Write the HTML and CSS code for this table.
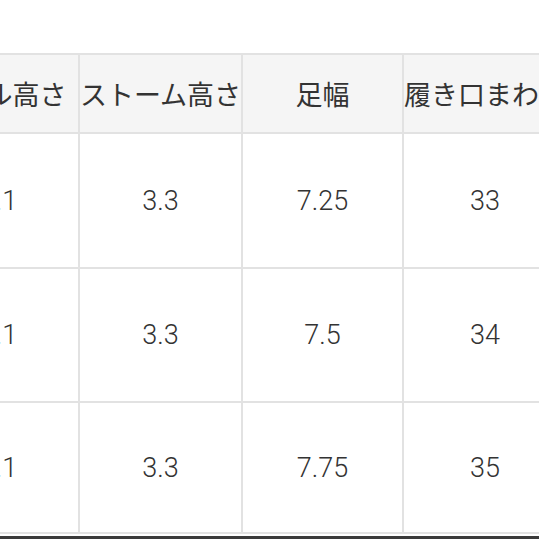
FILE: index.html
```html
<!DOCTYPE html>
<html lang="ja">
<head>
<meta charset="utf-8">
<link rel="stylesheet" href="styles.css">
</head>
<body>
<div class="page">
  <div class="table">
    <div class="cell head">ヒール高さ</div>
    <div class="cell head">ストーム高さ</div>
    <div class="cell head">足幅</div>
    <div class="cell head">履き口まわり</div>

    <div class="cell">2.1</div>
    <div class="cell">3.3</div>
    <div class="cell">7.25</div>
    <div class="cell">33</div>

    <div class="cell">2.1</div>
    <div class="cell">3.3</div>
    <div class="cell">7.5</div>
    <div class="cell">34</div>

    <div class="cell">2.1</div>
    <div class="cell">3.3</div>
    <div class="cell">7.75</div>
    <div class="cell">35</div>
  </div>
  <div class="bar"></div>
</div>
</body>
</html>
```

FILE: styles.css
```css
html, body {
  margin: 0;
  padding: 0;
  background: #ffffff;
}
.page {
  width: 539px;
  height: 539px;
  overflow: hidden;
  position: relative;
  padding-top: 53px;
  box-sizing: border-box;
}
.table {
  display: grid;
  grid-template-columns: 158px 161px 159px 162px;
  grid-template-rows: 77px 133px 132px 129px;
  gap: 2px;
  padding: 2px;
  background: #e2e2e2;
  margin-left: -82px;
  width: max-content;
  font-family: "Roboto", "Noto Sans CJK JP", sans-serif;
  font-weight: 300;
  font-size: 27px;
  color: #333333;
}
.cell {
  background: #ffffff;
  display: flex;
  align-items: center;
  justify-content: center;
  white-space: nowrap;
}
.head {
  background: #f5f5f5;
  font-weight: 400;
}
.bar {
  position: absolute;
  left: 0;
  right: 0;
  bottom: 0;
  height: 3px;
  background: #3a3a3a;
}
```
